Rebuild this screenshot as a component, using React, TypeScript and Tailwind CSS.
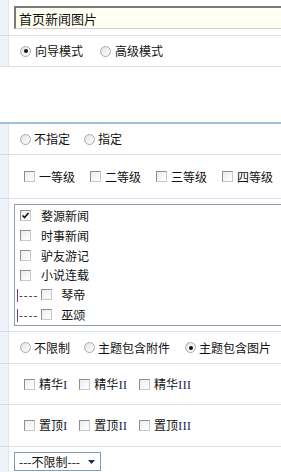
import React from 'react';

const Radio = ({ checked = false }: { checked?: boolean }) => (
  <span className="relative inline-flex h-[11px] w-[11px] shrink-0 items-center justify-center rounded-full border border-[#a9a9a9] bg-gradient-to-br from-[#e4e4e4] to-white">
    {checked && <span className="h-[4px] w-[4px] rounded-full bg-[#111]" />}
  </span>
);

const Check = ({ checked = false }: { checked?: boolean }) => (
  <span className="inline-flex h-[11px] w-[11px] shrink-0 items-center justify-center border border-[#8e8e8e] border-r-[#c8c8c8] border-b-[#c8c8c8] bg-gradient-to-br from-[#ececec] to-white">
    {checked && (
      <svg width="9" height="9" viewBox="0 0 9 9">
        <path d="M1.5 4.5 L3.5 6.5 L7.5 2" fill="none" stroke="#111" strokeWidth="1.6" />
      </svg>
    )}
  </span>
);

// 罗马数字用衬线字体
const Roman = ({ children }: { children: React.ReactNode }) => (
  <span className="font-['Liberation_Serif',serif] text-[13px] text-[#2d2d5c]">{children}</span>
);

const Row = ({ children, className = '' }: { children: React.ReactNode; className?: string }) => (
  <div className={`flex border-b border-[#dadde2] ${className}`}>
    <div className="w-[9px] shrink-0 border-r border-[#dfe6ee] bg-[#eef3fa]" />
    <div className="flex flex-1 items-center whitespace-nowrap">{children}</div>
  </div>
);

export default function App() {
  return (
    <div className="h-[472px] w-[281px] overflow-hidden bg-white font-['Noto_Sans_CJK_SC',sans-serif] text-[12px] leading-none text-[#111]">
      <Row className="h-[36px]">
        <div className="ml-[5px] flex h-[23px] w-[300px] shrink-0 items-center border-t-2 border-l-2 border-[#7b7b7b] border-b border-b-[#d0d0d0] bg-[#fffff2] pl-[3px] text-[13px]">
          首页新闻图片
        </div>
      </Row>

      <Row className="h-[31px]">
        <div className="ml-[11px] flex shrink-0 items-center gap-[4px]">
          <Radio checked />
          <span>向导模式</span>
        </div>
        <div className="ml-[17px] flex shrink-0 items-center gap-[4px]">
          <Radio />
          <span>高级模式</span>
        </div>
      </Row>

      <div className="h-[55px]" />

      <div className="h-[2px] bg-[#9fc2d6]" />

      <Row className="h-[31px]">
        <div className="ml-[11px] flex shrink-0 items-center gap-[3px]">
          <Radio />
          <span>不指定</span>
        </div>
        <div className="ml-[14px] flex shrink-0 items-center gap-[3px]">
          <Radio />
          <span>指定</span>
        </div>
      </Row>

      <Row className="h-[44px]">
        <div className="ml-[15px] flex shrink-0 items-center">
          {['一等级', '二等级', '三等级', '四等级'].map((t, i) => (
            <div key={t} className={`flex shrink-0 items-center gap-[4px] ${i > 0 ? 'ml-[15px]' : ''}`}>
              <Check />
              <span>{t}</span>
            </div>
          ))}
        </div>
      </Row>

      <Row className="h-[133px]">
        <div className="mt-[5px] ml-[5px] flex h-[122px] w-[300px] shrink-0 flex-col self-start border border-[#8d9fae] bg-white pt-[1px]">
          {['婺源新闻', '时事新闻', '驴友游记', '小说连载'].map((t, i) => (
            <div key={t} className="flex h-[20px] items-center pl-[5px]">
              <Check checked={i === 0} />
              <span className="ml-[10px]">{t}</span>
            </div>
          ))}
          {['琴帝', '巫颂'].map(t => (
            <div key={t} className="flex h-[20px] items-center pl-[2px]">
              <span className="h-[13px] w-[1px] bg-[#6b3b8c]" />
              <span className="ml-[1px] text-[11px] tracking-[1px]">----</span>
              <span className="ml-[3px]"><Check /></span>
              <span className="ml-[9px]">{t}</span>
            </div>
          ))}
        </div>
      </Row>

      <Row className="h-[32px]">
        <div className="ml-[11px] flex shrink-0 items-center gap-[3px]">
          <Radio />
          <span>不限制</span>
        </div>
        <div className="ml-[14px] flex shrink-0 items-center gap-[3px]">
          <Radio />
          <span>主题包含附件</span>
        </div>
        <div className="ml-[15px] flex shrink-0 items-center gap-[3px]">
          <Radio checked />
          <span>主题包含图片</span>
        </div>
      </Row>

      <Row className="h-[41px]">
        <div className="ml-[15px] flex shrink-0 items-center">
          {['I', 'II', 'III'].map((r, i) => (
            <div key={r} className={`flex shrink-0 items-center gap-[4px] ${i > 0 ? 'ml-[12px]' : ''}`}>
              <Check />
              <span>精华<Roman>{r}</Roman></span>
            </div>
          ))}
        </div>
      </Row>

      <Row className="h-[42px]">
        <div className="ml-[15px] flex shrink-0 items-center">
          {['I', 'II', 'III'].map((r, i) => (
            <div key={r} className={`flex shrink-0 items-center gap-[4px] ${i > 0 ? 'ml-[12px]' : ''}`}>
              <Check />
              <span>置顶<Roman>{r}</Roman></span>
            </div>
          ))}
        </div>
      </Row>

      <Row className="h-[30px] border-b-0">
        <div className="mt-[5px] ml-[5px] flex h-[19px] w-[87px] shrink-0 items-center justify-between self-start border border-[#7f9db9] bg-white pr-[5px] pl-[4px] text-[12px]">
          <span>---不限制---</span>
          <svg width="7" height="4" viewBox="0 0 7 4">
            <path d="M0 0 H7 L3.5 4 Z" fill="#1d2a5a" />
          </svg>
        </div>
      </Row>
    </div>
  );
}
